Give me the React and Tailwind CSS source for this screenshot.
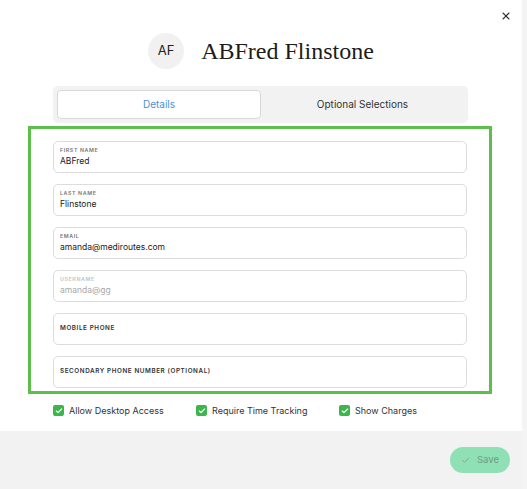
import React from "react";
import { X, Check } from "lucide-react";

const fields = [
  { label: "First Name", value: "ABFred" },
  { label: "Last Name", value: "Flinstone" },
  { label: "Email", value: "amanda@mediroutes.com" },
  { label: "Username", value: "amanda@gg", disabled: true },
  { label: "Mobile Phone", value: "" },
  { label: "Secondary Phone Number (Optional)", value: "" },
];

const Field = ({ label, value, disabled }) => {
  if (!value) {
    return (
      <div className="h-[32px] rounded-[5px] border border-[#dcdcdc] bg-white px-[6px] flex items-center">
        <span className="text-[6.3px] font-semibold uppercase tracking-[0.6px] text-[#333]">
          {label}
        </span>
      </div>
    );
  }
  return (
    <div className="h-[32px] rounded-[5px] border border-[#dcdcdc] bg-white px-[6px] pt-[5px] flex flex-col">
      <span
        className={`text-[5.3px] font-semibold uppercase tracking-[0.6px] leading-[7px] ${
          disabled ? "text-[#c4c4c4]" : "text-[#777]"
        }`}
      >
        {label}
      </span>
      <span
        className={`text-[8.5px] leading-[13px] mt-[1px] ${
          disabled ? "text-[#a8a8a8]" : "text-[#222]"
        }`}
      >
        {value}
      </span>
    </div>
  );
};

const CheckItem = ({ label }) => (
  <div className="flex items-center gap-[5px] w-[143px]">
    <div className="w-[11px] h-[11px] rounded-[2px] bg-[#3cb54d] flex items-center justify-center">
      <Check className="w-[8px] h-[8px] text-white" strokeWidth={3.5} />
    </div>
    <span className="text-[9px] text-[#333]">{label}</span>
  </div>
);

export default function App() {
  return (
    <div
      className="w-[527px] h-[489px] flex bg-white overflow-hidden"
      style={{ fontFamily: "Inter, 'Noto Sans', sans-serif" }}
    >
      <div className="w-[522px] flex flex-col">
        <div className="flex-1 flex flex-col relative">
          <button className="absolute right-[10px] top-[10px] text-[#333]">
            <X className="w-[12px] h-[12px]" strokeWidth={2.2} />
          </button>

          <div className="flex items-center justify-center gap-[17px] pt-[33px]">
            <div className="w-[36px] h-[36px] rounded-full bg-[#f1f1f1] flex items-center justify-center text-[13px] text-[#222]">
              AF
            </div>
            <h1
              className="text-[24px] text-[#1c1c1c] leading-none"
              style={{ fontFamily: "'Liberation Serif', serif" }}
            >
              ABFred Flinstone
            </h1>
          </div>

          <div className="mx-[53px] mt-[17px] w-[415px] h-[37px] rounded-[5px] bg-[#f2f2f2] p-[4px] flex">
            <div className="w-[204px] h-full rounded-[4px] bg-white border border-[#d8d8d8] flex items-center justify-center text-[10px] text-[#4d8fd6]">
              Details
            </div>
            <div className="flex-1 flex items-center justify-center text-[10px] text-[#333]">
              Optional Selections
            </div>
          </div>

          <div className="mx-[28px] mt-[3px] w-[464px] border-[3px] border-[#5cbf4c] px-[22px] pt-[12px] pb-[3px] flex flex-col gap-[11px]">
            {fields.map((f) => (
              <Field key={f.label} {...f} />
            ))}
          </div>

          <div className="flex pl-[53px] mt-[10px]">
            <CheckItem label="Allow Desktop Access" />
            <CheckItem label="Require Time Tracking" />
            <CheckItem label="Show Charges" />
          </div>
        </div>

        <div className="h-[58px] bg-[#f2f2f2] flex items-center justify-end pr-[12px]">
          <button className="w-[60px] h-[26px] rounded-full bg-[#8fe0b5] flex items-center justify-center gap-[7px] text-[9.5px] text-[#6f9c84]">
            <Check className="w-[9px] h-[9px]" strokeWidth={2} />
            Save
          </button>
        </div>
      </div>
      <div className="w-[5px] bg-[#f4f4f4]" />
    </div>
  );
}
